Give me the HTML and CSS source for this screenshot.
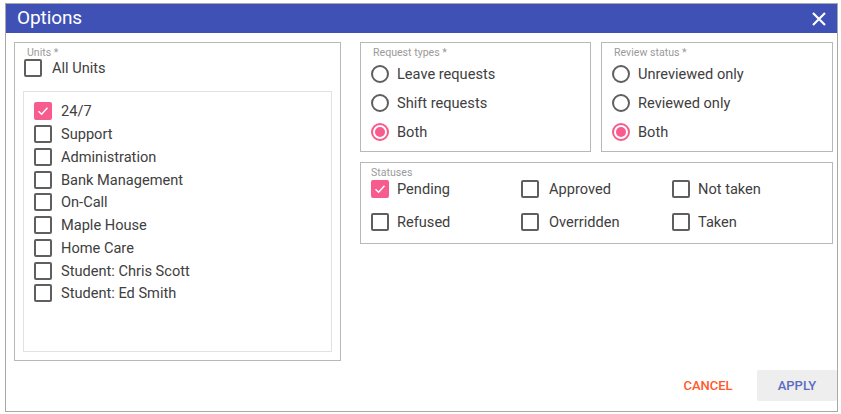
FILE: index.html
```html
<!DOCTYPE html>
<html>
<head>
<meta charset="utf-8">
<link rel="stylesheet" href="styles.css">
</head>
<body>
<div class="dialog">
  <div class="header">
    <span class="title">Options</span>
    <svg class="close" width="14" height="14" viewBox="0 0 14 14"><path d="M1 1L13 13M13 1L1 13" stroke="#fff" stroke-width="2.2" fill="none"/></svg>
  </div>
  <div class="body">
    <div class="box units">
      <div class="legend">Units *</div>
      <div class="row all"><span class="cb"></span><span>All Units</span></div>
      <div class="list">
        <div class="row item"><span class="cb on"><svg viewBox="0 0 18 18" width="18" height="18"><path d="M4.5 9.2L7.6 12.2L13.5 5.8" stroke="#fff" stroke-width="1.5" fill="none"/></svg></span><span>24/7</span></div>
        <div class="row item"><span class="cb"></span><span>Support</span></div>
        <div class="row item"><span class="cb"></span><span>Administration</span></div>
        <div class="row item"><span class="cb"></span><span>Bank Management</span></div>
        <div class="row item"><span class="cb"></span><span>On-Call</span></div>
        <div class="row item"><span class="cb"></span><span>Maple House</span></div>
        <div class="row item"><span class="cb"></span><span>Home Care</span></div>
        <div class="row item"><span class="cb"></span><span>Student: Chris Scott</span></div>
        <div class="row item"><span class="cb"></span><span>Student: Ed Smith</span></div>
      </div>
    </div>
    <div class="right">
      <div class="toprow">
        <div class="box radios">
          <div class="legend">Request types *</div>
          <div class="row radio"><span class="rb"></span><span>Leave requests</span></div>
          <div class="row radio"><span class="rb"></span><span>Shift requests</span></div>
          <div class="row radio"><span class="rb on"></span><span>Both</span></div>
        </div>
        <div class="box radios">
          <div class="legend">Review status *</div>
          <div class="row radio"><span class="rb"></span><span>Unreviewed only</span></div>
          <div class="row radio"><span class="rb"></span><span>Reviewed only</span></div>
          <div class="row radio"><span class="rb on"></span><span>Both</span></div>
        </div>
      </div>
      <div class="box statuses">
        <div class="legend">Statuses</div>
        <div class="grid">
          <div class="row st"><span class="cb on"><svg viewBox="0 0 18 18" width="18" height="18"><path d="M4.5 9.2L7.6 12.2L13.5 5.8" stroke="#fff" stroke-width="1.5" fill="none"/></svg></span><span>Pending</span></div>
          <div class="row st"><span class="cb"></span><span>Approved</span></div>
          <div class="row st"><span class="cb"></span><span>Not taken</span></div>
          <div class="row st"><span class="cb"></span><span>Refused</span></div>
          <div class="row st"><span class="cb"></span><span>Overridden</span></div>
          <div class="row st"><span class="cb"></span><span>Taken</span></div>
        </div>
      </div>
    </div>
  </div>
  <div class="footer">
    <button class="btn cancel">CANCEL</button>
    <button class="btn apply">APPLY</button>
  </div>
</div>
</body>
</html>
```
FILE: styles.css
```css
* { box-sizing: border-box; }
html, body { margin: 0; padding: 0; background: #fff; }
body { font-family: Roboto, "Liberation Sans", sans-serif; color: #404040; font-size: 14.6px; }
.dialog {
  margin: 3px 0 0 5px;
  width: 833px;
  height: 409px;
  border: 1px solid #a8a8a8;
  display: flex;
  flex-direction: column;
}
.header {
  background: #3f51b5;
  height: 29px;
  flex: none;
  display: flex;
  align-items: center;
  justify-content: space-between;
  padding: 0 11px 3px 11px;
  color: #fff;
}
.title { font-size: 19px; letter-spacing: -0.1px; }
.close { margin-top: 3px; }
.body {
  display: flex;
  padding: 9px 3px 0 8px;
  gap: 19px;
}
.box {
  border: 1px solid #b8b8b8;
}
.legend {
  font-size: 10.6px;
  color: #9a9a9a;
  line-height: 12px;
}
.units {
  width: 327px;
  height: 319px;
  padding: 4px 8px 8px 8px;
  display: flex;
  flex-direction: column;
}
.units .legend { padding-left: 4px; }
.row { display: flex; align-items: center; }
.cb {
  width: 18px;
  height: 18px;
  border: 2px solid #5f5f5f;
  border-radius: 2px;
  flex: none;
  position: relative;
}
.cb.on { background: #f85b8d; border-color: #f85b8d; }
.cb.on svg { position: absolute; left: -2px; top: -2px; }
.all { height: 20px; margin-top: -1px; gap: 10px; padding-left: 1px; }
.list {
  margin-top: 13px;
  flex: 1;
  border: 1px solid #e2e2e2;
  padding: 8px 10px 0 10px;
}
.item { height: 22.75px; gap: 9px; }
.right { display: flex; flex-direction: column; gap: 10px; }
.toprow { display: flex; gap: 10px; }
.radios {
  width: 231px;
  height: 110px;
  padding: 4px 10px 0 10px;
}
.radios + .radios { width: 232px; }
.radios .legend { padding-left: 2px; margin-bottom: 0; }
.radio { height: 29px; gap: 8px; }
.rb {
  width: 18px;
  height: 18px;
  border: 2px solid #5f5f5f;
  border-radius: 50%;
  flex: none;
  position: relative;
}
.rb.on { border-color: #f85b8d; }
.rb.on::after {
  content: "";
  position: absolute;
  left: 2px; top: 2px;
  width: 10px; height: 10px;
  border-radius: 50%;
  background: #f85b8d;
}
.statuses {
  width: 473px;
  height: 82px;
  padding: 4px 10px 0 10px;
}
.grid {
  display: grid;
  grid-template-columns: 150px 151px 150px;
  grid-auto-rows: 33px;
  margin-top: -7px;
}
.st { gap: 8px; }
.st:nth-child(2) span:last-child, .st:nth-child(5) span:last-child { margin-left: 2px; }
.footer {
  margin-top: auto;
  display: flex;
  justify-content: flex-end;
  align-items: center;
  gap: 9px;
  padding: 0 0 10px 0;
}
.btn {
  font-family: Roboto, "Liberation Sans", sans-serif;
  font-size: 13px;
  font-weight: 500;
  border: none;
  background: transparent;
  width: 80px;
  height: 31px;
  border-radius: 2px;
  padding: 0;
}
.cancel { color: #ff5a2a; }
.apply { background: #eeeeee; color: #5c6bc0; }
```
